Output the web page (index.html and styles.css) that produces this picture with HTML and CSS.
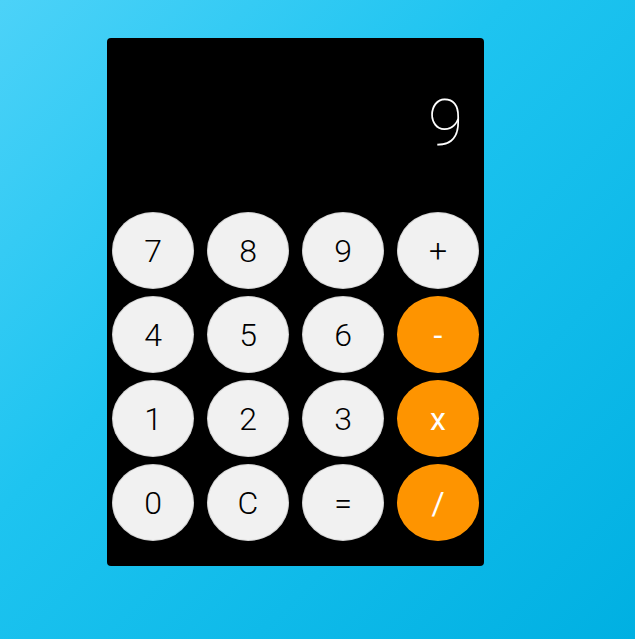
FILE: index.html
```html
<!DOCTYPE html>
<html>
<head>
<meta charset="utf-8">
<link rel="stylesheet" href="styles.css">
</head>
<body>
<div class="calc">
  <div class="display">9</div>
  <div class="keys">
    <button class="key">7</button>
    <button class="key">8</button>
    <button class="key">9</button>
    <button class="key">+</button>
    <button class="key">4</button>
    <button class="key">5</button>
    <button class="key">6</button>
    <button class="key op">-</button>
    <button class="key">1</button>
    <button class="key">2</button>
    <button class="key">3</button>
    <button class="key op">x</button>
    <button class="key">0</button>
    <button class="key">C</button>
    <button class="key">=</button>
    <button class="key op">/</button>
  </div>
</div>
</body>
</html>
```
FILE: styles.css
```css
html, body {
  margin: 0;
  padding: 0;
}
body {
  width: 635px;
  height: 639px;
  overflow: hidden;
  background: linear-gradient(135deg, #4cd2f8 0%, #1ec4f0 40%, #00b0e2 100%);
  font-family: Roboto, "Noto Sans", sans-serif;
}
.calc {
  margin: 38px 0 0 107px;
  width: 377px;
  height: 528px;
  background: #000;
  border-radius: 4px;
  display: flex;
  flex-direction: column;
  box-sizing: border-box;
}
.display {
  height: 174px;
  box-sizing: border-box;
  padding: 54px 21px 0 0;
  text-align: right;
  color: #fff;
  font-size: 64px;
  font-weight: 100;
  line-height: 64px;
}
.keys {
  padding: 0 5px;
  display: grid;
  grid-template-columns: repeat(4, 82px);
  grid-template-rows: repeat(4, 77px);
  column-gap: 13px;
  row-gap: 7px;
}
.key {
  border: none;
  margin: 0;
  padding: 0;
  border-radius: 50%;
  background: #f1f1f1;
  box-shadow: inset 0 0 0 1px rgba(0,0,0,0.12);
  color: #000;
  font-family: Roboto, "Noto Sans", sans-serif;
  font-size: 32px;
  font-weight: 300;
  display: flex;
  align-items: center;
  justify-content: center;
}
.key.op {
  background: #fe9400;
  color: #fff;
  box-shadow: none;
  font-weight: 400;
}
```
